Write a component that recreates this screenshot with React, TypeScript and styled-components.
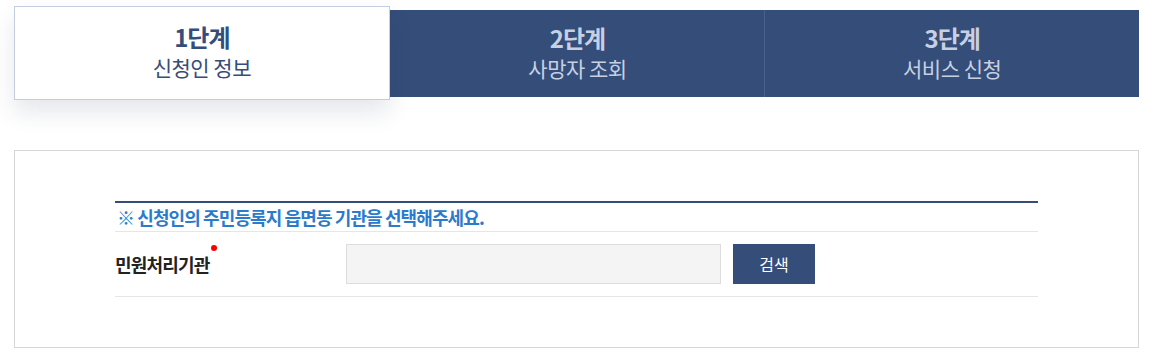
import styled, { createGlobalStyle } from 'styled-components'

const GlobalStyle = createGlobalStyle`
    body {
        margin: 0;
        background: #fff;
        font-family: "Noto Sans CJK KR", "Noto Sans", sans-serif;
    }
`

const Page = styled.div`
    width: 1125px;
    padding: 10px 19px 14px 14px;
`

const StepList = styled.ol`
    display: flex;
    height: 87px;
    margin: 0;
    padding: 0;
    list-style: none;
    background: #344d79;
`

const Step = styled.li<{ $active?: boolean }>`
    flex: 1;
    display: flex;
    flex-direction: column;
    align-items: center;
    justify-content: center;
    box-sizing: border-box;
    padding-bottom: 2px;
    color: ${(p) => (p.$active ? '#344d79' : '#c7d0e2')};
    border-left: ${(p) => (p.$active ? '0' : '1px solid #4a6290')};
    ${(p) =>
        p.$active &&
        `
        position: relative;
        z-index: 1;
        margin: -4px 1px -3px 0;
        background: #fff;
        border: 1px solid #c4cce0;
        box-shadow: 0 12px 22px rgba(40, 55, 90, 0.12);
    `}
    &:nth-child(2) {
        border-left: 0;
    }
`

const StepNumber = styled.strong`
    font-size: 24px;
    font-weight: 700;
    line-height: 30px;
    letter-spacing: -1px;
`

const StepName = styled.span`
    font-size: 21px;
    line-height: 30px;
    letter-spacing: -0.5px;
`

const Panel = styled.section`
    margin-top: 53px;
    padding: 50px 100px 50px;
    border: 1px solid #d6d6d6;
`

const Notice = styled.p`
    margin: 0;
    padding: 0 0 0 2px;
    height: 28px;
    border-top: 2px solid #344d79;
    border-bottom: 1px solid #e6e6e6;
    color: #2b7bcc;
    font-size: 18px;
    font-weight: 700;
    line-height: 28px;
    letter-spacing: -0.9px;
`

const FormRow = styled.div`
    display: flex;
    align-items: center;
    padding: 12px 0;
    border-bottom: 1px solid #e6e6e6;
`

const Label = styled.label`
    width: 231px;
    color: #222;
    font-size: 18px;
    font-weight: 700;
    letter-spacing: -0.8px;

    span {
        position: relative;
    }

    span::after {
        content: '';
        position: absolute;
        top: -6px;
        right: -7px;
        width: 6px;
        height: 6px;
        border-radius: 50%;
        background: #f00;
    }
`

const Input = styled.input`
    box-sizing: border-box;
    width: 375px;
    height: 40px;
    border: 1px solid #dcdcdc;
    background: #f4f4f4;
    outline: none;
`

const SearchButton = styled.button`
    width: 82px;
    height: 40px;
    margin-left: 12px;
    border: 0;
    background: #344d79;
    color: #fff;
    font-family: inherit;
    font-size: 16px;
    cursor: pointer;
`

const steps = [
    { number: '1단계', name: '신청인 정보' },
    { number: '2단계', name: '사망자 조회' },
    { number: '3단계', name: '서비스 신청' },
]

export default function App() {
    return (
        <Page>
            <GlobalStyle />
            <StepList>
                {steps.map((step, i) => (
                    <Step key={step.number} $active={i === 0}>
                        <StepNumber>{step.number}</StepNumber>
                        <StepName>{step.name}</StepName>
                    </Step>
                ))}
            </StepList>
            <Panel>
                <Notice>※ 신청인의 주민등록지 읍면동 기관을 선택해주세요.</Notice>
                <FormRow>
                    <Label htmlFor="agency">
                        <span>민원처리기관</span>
                    </Label>
                    <Input id="agency" type="text" readOnly />
                    <SearchButton type="button">검색</SearchButton>
                </FormRow>
            </Panel>
        </Page>
    )
}
